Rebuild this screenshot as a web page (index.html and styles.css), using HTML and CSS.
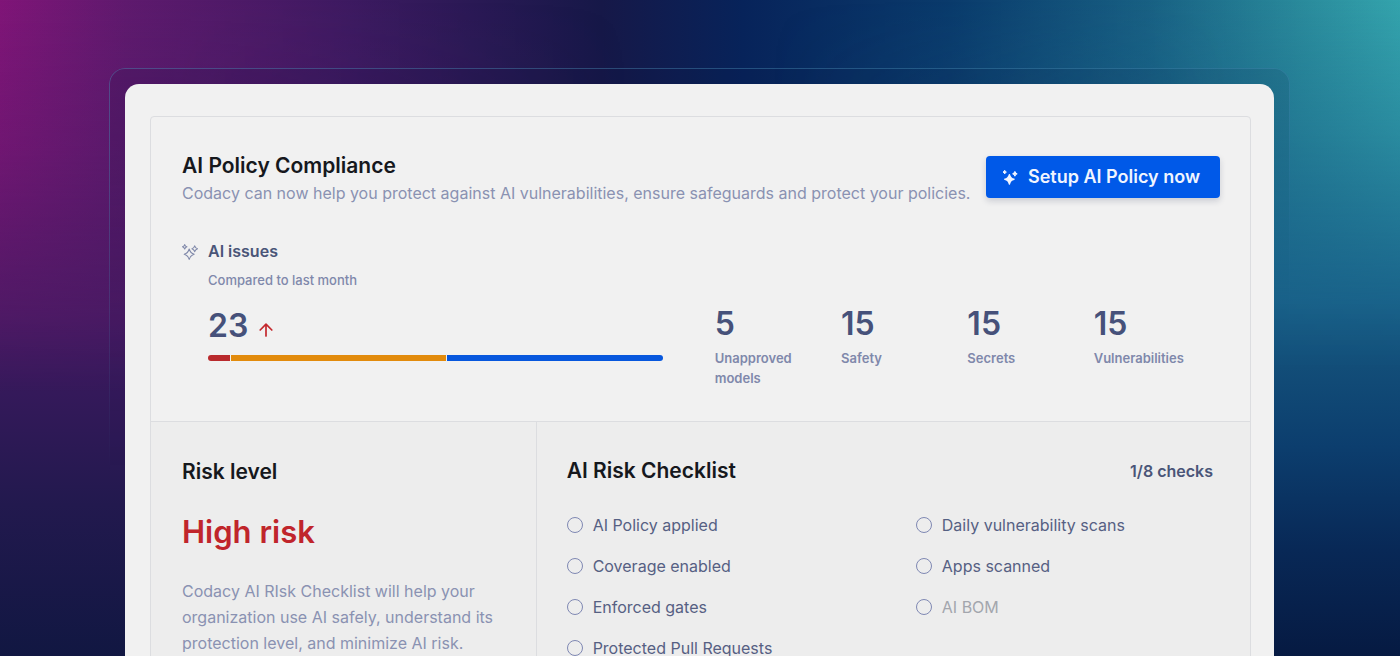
FILE: index.html
```html
<!DOCTYPE html>
<html lang="en">
<head>
<meta charset="utf-8">
<title>AI Policy Compliance</title>
<link rel="stylesheet" href="styles.css">
</head>
<body>
<main class="stage">
  <div class="frame">
    <div class="window">
      <article class="card">
        <section class="summary">
          <header class="summary-head">
            <div>
              <h1 class="title">AI Policy Compliance</h1>
              <p class="subtitle">Codacy can now help you protect against AI vulnerabilities, ensure safeguards and protect your policies.</p>
            </div>
            <button class="setup" type="button">
              <svg class="sparkle" viewBox="0 0 16 16" fill="currentColor" stroke="currentColor" stroke-linejoin="round" aria-hidden="true">
                <path d="M7.4 5.6Q8.4 9.6 12 10.3Q8.4 11 7.4 15Q6.4 11 2.8 10.3Q6.4 9.6 7.4 5.6Z" stroke-width="1.4"/>
                <path d="M2.7 1.3Q3.1 2.7 4.4 3.1Q3.1 3.5 2.7 4.9Q2.3 3.5 1 3.1Q2.3 2.7 2.7 1.3Z" stroke-width="1"/>
                <path d="M12.9 2.4Q13.4 4.4 15.2 4.8Q13.4 5.2 12.9 7.2Q12.4 5.2 10.6 4.8Q12.4 4.4 12.9 2.4Z" stroke-width="1"/>
              </svg>
              Setup AI Policy now
            </button>
          </header>

          <div class="issues">
            <svg class="sparkle issues-icon" viewBox="0 0 16 16" fill="none" stroke="currentColor" stroke-width="1.1" stroke-linejoin="round" aria-hidden="true">
              <path d="M7.2 5Q8.4 9.2 12.2 10.2Q8.4 11.2 7.2 15.4Q6 11.2 2.2 10.2Q6 9.2 7.2 5Z"/>
              <path d="M2.7 .6Q3.2 2.3 4.9 2.8Q3.2 3.3 2.7 5Q2.2 3.3 .5 2.8Q2.2 2.3 2.7 .6Z"/>
              <path d="M12.7 1.8Q13.4 4.1 15.5 4.7Q13.4 5.3 12.7 7.6Q12 5.3 9.9 4.7Q12 4.1 12.7 1.8Z"/>
            </svg>
            <div class="issues-body">
              <h2 class="issues-title">AI issues</h2>
              <p class="label">Compared to last month</p>
              <div class="metrics">
                <div class="trend">
                  <div class="trend-value">
                    <span class="number">23</span>
                    <svg class="arrow" viewBox="0 0 14 14" fill="none" stroke="currentColor" stroke-width="1.7" stroke-linecap="round" stroke-linejoin="round" aria-hidden="true"><path d="M7 13V1.5M1.2 7L7 1.2L12.8 7"/></svg>
                  </div>
                  <div class="bar">
                    <span class="seg seg-red"></span>
                    <span class="seg seg-amber"></span>
                    <span class="seg seg-blue"></span>
                  </div>
                </div>
                <div class="stats">
                  <div class="stat"><span class="number">5</span><span class="label stat-label">Unapproved models</span></div>
                  <div class="stat"><span class="number">15</span><span class="label stat-label">Safety</span></div>
                  <div class="stat"><span class="number">15</span><span class="label stat-label">Secrets</span></div>
                  <div class="stat"><span class="number">15</span><span class="label stat-label">Vulnerabilities</span></div>
                </div>
              </div>
            </div>
          </div>
        </section>

        <div class="details">
          <section class="risk">
            <h2 class="title">Risk level</h2>
            <p class="risk-value">High risk</p>
            <p class="risk-text">Codacy AI RIsk Checklist will help your organization use AI safely, understand its protection level, and minimize AI risk.</p>
          </section>
          <section class="checklist">
            <header class="checklist-head">
              <h2 class="title">AI Risk Checklist</h2>
              <span class="count">1/8 checks</span>
            </header>
            <div class="checks">
              <div class="check-column">
                <label class="check"><input type="checkbox">AI Policy applied</label>
                <label class="check"><input type="checkbox">Coverage enabled</label>
                <label class="check"><input type="checkbox">Enforced gates</label>
                <label class="check"><input type="checkbox">Protected Pull Requests</label>
              </div>
              <div class="check-column">
                <label class="check"><input type="checkbox">Daily vulnerability scans</label>
                <label class="check"><input type="checkbox">Apps scanned</label>
                <label class="check check-muted"><input type="checkbox" disabled>AI BOM</label>
              </div>
            </div>
          </section>
        </div>
      </article>
    </div>
  </div>
</main>
</body>
</html>
```
FILE: styles.css
```css
* {
  box-sizing: border-box;
}

body,
h1,
h2,
p {
  margin: 0;
}

body {
  font-family: Inter, "Liberation Sans", sans-serif;
  font-size: 16px;
  color: #4a5578;
}

.stage {
  position: relative;
  isolation: isolate;
  height: 100vh;
  overflow: hidden;
  padding: 68px 110px 0 109px;
  background: linear-gradient(to right, #801578 0%, #5f1a6e 9%, #3d1a61 25%, #161848 43%, #07235a 53%, #0a3b6c 68%, #186083 82%, #2a8b9c 93%, #34a4ad 100%);
}

/* Side glows that sink into navy towards the bottom */
.stage::before,
.stage::after {
  content: "";
  position: absolute;
  inset: 0;
  z-index: -1;
}

.stage::before {
  background: linear-gradient(to bottom, rgba(74, 26, 100, 0) 0%, rgba(74, 26, 100, 0.3) 23%, rgba(70, 26, 98, 0.85) 48%, #34195a 60%, #22194e 77%, #111742 100%);
  mask-image: linear-gradient(to right, #000 12%, transparent 45%);
}

.stage::after {
  background: linear-gradient(to bottom, rgba(24, 95, 136, 0) 0%, rgba(24, 95, 136, 0.35) 20%, rgba(24, 95, 136, 0.95) 46%, #124d78 56%, #0c3e6e 68%, #082856 84%, #061a42 100%);
  mask-image: linear-gradient(to left, #000 12%, transparent 45%);
}

.frame {
  position: relative;
  min-height: 100vh;
  padding: 16px 16px 0;
}

/* Faint outline that fades out down the sides */
.frame::before {
  content: "";
  position: absolute;
  inset: 0;
  z-index: -1;
  border: 1px solid rgba(80, 150, 190, 0.4);
  border-radius: 16px;
  background: rgba(5, 20, 60, 0.12);
  mask-image: linear-gradient(to bottom, #000 10%, transparent 60%);
}

.window {
  min-height: 100vh;
  padding: 32px 23px 32px 25px;
  border-radius: 14px;
  background: #f1f1f1;
}

.card {
  border: 1px solid #dcdde0;
  border-radius: 4px;
  overflow: hidden;
}

.summary {
  padding: 35px 30px 33px 31px;
}

.summary-head {
  display: flex;
  justify-content: space-between;
  align-items: flex-start;
  gap: 12px;
}

.title {
  font-size: 21px;
  line-height: 28px;
  font-weight: 600;
  color: #16181d;
}

.subtitle {
  font-size: 16px;
  line-height: 26px;
  color: #8a92b2;
}

.setup {
  display: flex;
  align-items: center;
  gap: 10px;
  flex: none;
  height: 42px;
  margin-top: 4px;
  padding: 0 20px 0 16px;
  border: 0;
  border-radius: 4px;
  background: #0059e8;
  color: #f1f5ff;
  font: 600 18px/24px Inter, "Liberation Sans", sans-serif;
  box-shadow: 0 3px 6px rgba(30, 40, 80, 0.18);
}

.sparkle {
  flex: none;
  width: 16px;
  height: 16px;
}

.issues {
  display: flex;
  gap: 10px;
  margin-top: 33px;
}

.issues-icon {
  margin-top: 5px;
  color: #8089aa;
}

.issues-body {
  flex: 1;
}

.issues-title {
  font-size: 16px;
  line-height: 24px;
  font-weight: 600;
}

.label {
  font-size: 13px;
  line-height: 20px;
  font-weight: 500;
  color: #7f88ab;
}

.stat-label {
  font-weight: 600;
}

.issues-title + .label {
  margin-top: 7px;
}

.metrics {
  display: grid;
  grid-template-columns: 9fr 10fr;
  gap: 52px;
  margin-top: 14px;
}

.number {
  font-size: 32px;
  line-height: 40px;
  font-weight: 600;
  color: #46517a;
}

.trend {
  padding-top: 2px;
}

.trend-value {
  display: flex;
  align-items: center;
  gap: 11px;
}

.arrow {
  width: 14px;
  height: 14px;
  margin-top: 8px;
  color: #c4282d;
}

.bar {
  display: grid;
  grid-template-columns: 1fr 10fr 10fr;
  gap: 1px;
  height: 6px;
  margin-top: 9px;
  border-radius: 3px;
  overflow: hidden;
}

.seg-red {
  background: #b92a2d;
}

.seg-amber {
  background: #e28b0c;
}

.seg-blue {
  background: #0757dd;
}

.stats {
  display: grid;
  grid-template-columns: repeat(4, 1fr);
}

.stat {
  display: flex;
  flex-direction: column;
  gap: 4px;
  padding-right: 32px;
}

.details {
  display: grid;
  grid-template-columns: 35% 1fr;
  border-top: 1px solid #dcdde0;
  background: #ededed;
}

.risk {
  padding: 36px 31px 32px;
}

.risk-value {
  margin-top: 26px;
  font-size: 31px;
  line-height: 40px;
  font-weight: 600;
  color: #c0252b;
}

.risk-text {
  margin-top: 26px;
  font-size: 16px;
  line-height: 26px;
  color: #8a92b2;
}

.checklist {
  padding: 35px 37px 32px 30px;
  border-left: 1px solid #dcdde0;
}

.checklist-head {
  display: flex;
  justify-content: space-between;
  align-items: center;
}

.count {
  font-size: 16px;
  font-weight: 600;
}

.checks {
  display: grid;
  grid-template-columns: 1fr 1fr;
  gap: 52px;
  margin-top: 27px;
}

.check-column {
  display: flex;
  flex-direction: column;
  gap: 15px;
}

.check {
  display: flex;
  align-items: center;
  gap: 10px;
  font-size: 16px;
  line-height: 26px;
  color: #566083;
}

.check input {
  appearance: none;
  flex: none;
  width: 16px;
  height: 16px;
  margin: 0;
  border: 1px solid #7f88b3;
  border-radius: 50%;
}

.check input:checked {
  background: #0059e8;
}

.check-muted {
  color: #a3a6ad;
}
```
